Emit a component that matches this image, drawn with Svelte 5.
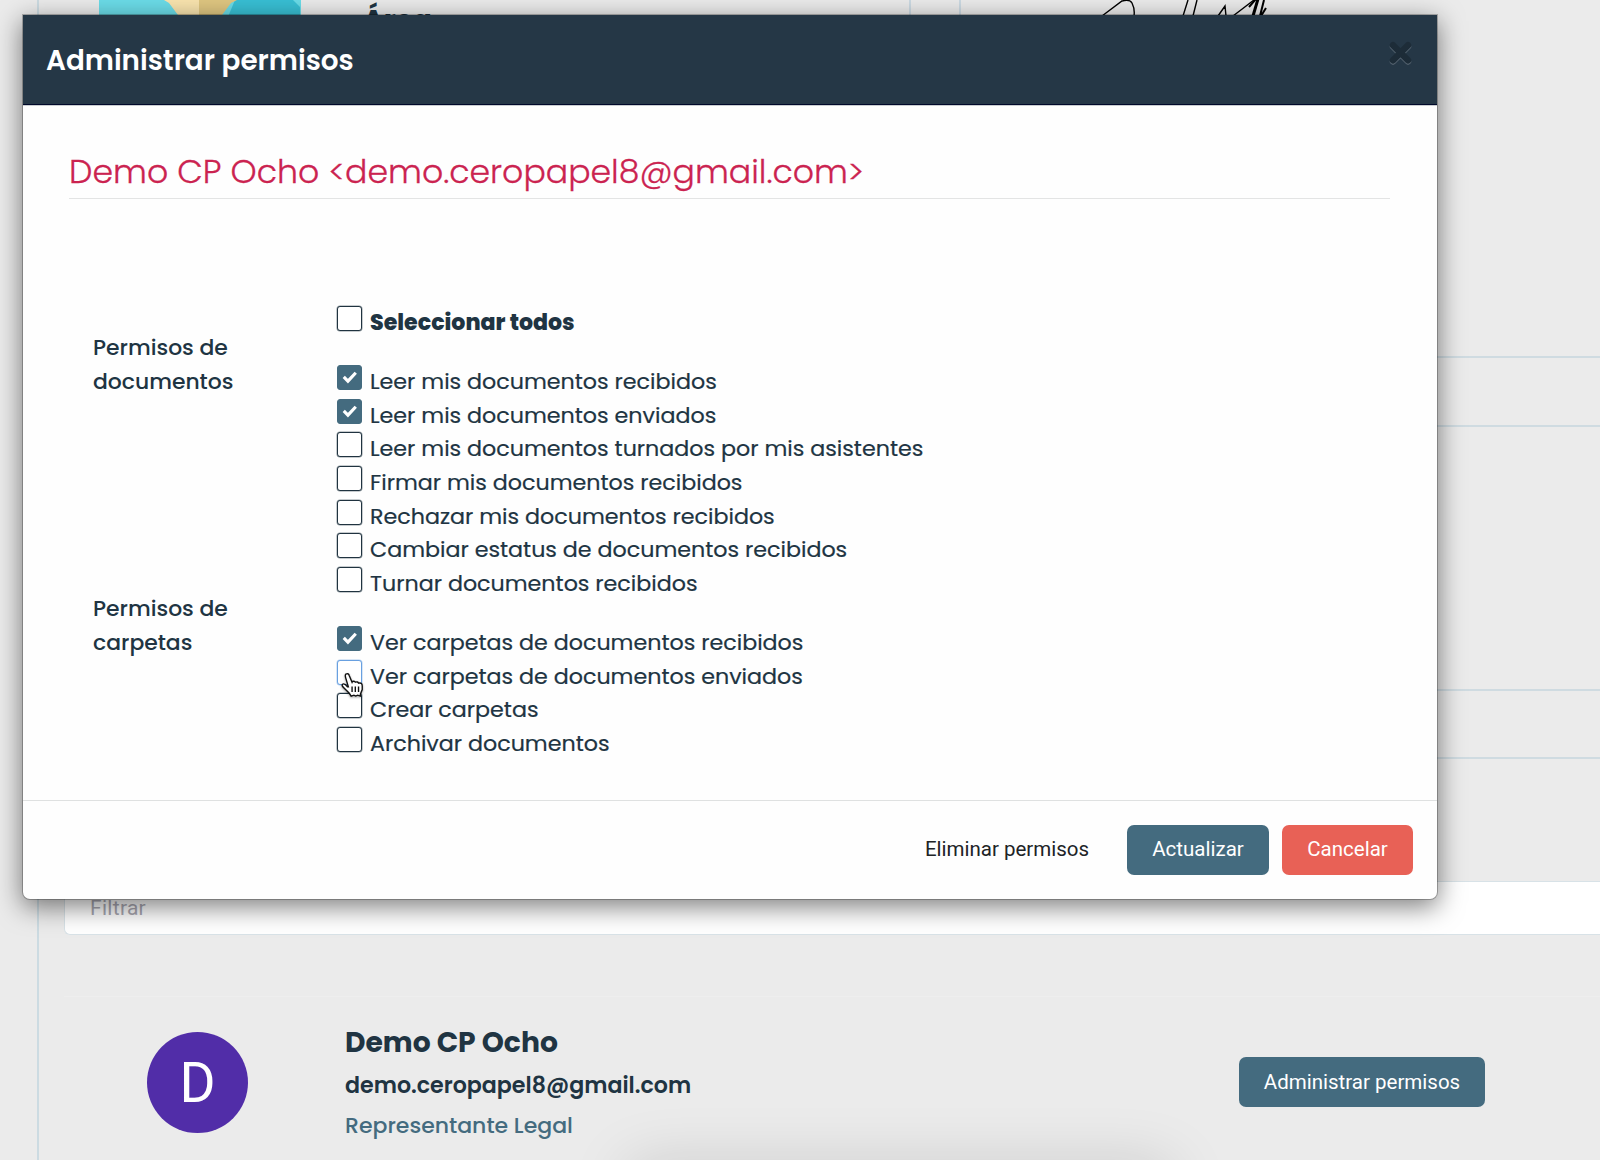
<script>
	let documentPermissions = [
		{ name: "Leer mis documentos recibidos", isChecked: true },
		{ name: "Leer mis documentos enviados", isChecked: true },
		{ name: "Leer mis documentos turnados por mis asistentes", isChecked: false },
		{ name: "Firmar mis documentos recibidos", isChecked: false },
		{ name: "Rechazar mis documentos recibidos", isChecked: false },
		{ name: "Cambiar estatus de documentos recibidos", isChecked: false },
		{ name: "Turnar documentos recibidos", isChecked: false },
	];

	let folderPermissions = [
		{ name: "Ver carpetas de documentos recibidos", isChecked: true },
		{ name: "Ver carpetas de documentos enviados", isChecked: false, isFocused: true },
		{ name: "Crear carpetas", isChecked: false },
		{ name: "Archivar documentos", isChecked: false },
	];

	const groups = [
		{ title: "Permisos de documentos", items: documentPermissions },
		{ title: "Permisos de carpetas", items: folderPermissions },
	];
</script>

<style>
	:global(body) {
		background: #ebebeb;
	}

	.page {
		position: relative;
		display: flex;
		flex-direction: column;
		box-sizing: border-box;
		width: 1600px;
		height: 1160px;
		padding-left: 37px;
		overflow: hidden;
		font-family: Poppins, Inter, "Open Sans", sans-serif;
		color: #203442;
	}

	.content {
		display: flex;
		flex-direction: column;
		height: 1160px;
		border-left: 2px solid #ccdbe2;
	}

	.profile {
		display: flex;
		height: 357px;
	}

	.photo {
		width: 202px;
		margin-left: 60px;
	}

	.area {
		width: 546px;
		margin-left: 62px;
		padding-top: 3px;
		border-right: 2px solid #cbd9e2;
		font-size: 28px;
		line-height: 36px;
		font-weight: 700;
	}

	.signature {
		flex: 1;
		margin-left: 48px;
		border-left: 2px solid #cbd9e2;
	}

	.signature svg {
		display: block;
		margin-left: 130px;
	}

	.row {
		box-sizing: border-box;
		border-top: 2px solid #cfdbe1;
	}

	.row-title {
		height: 69px;
	}

	.row-body {
		height: 264px;
	}

	.row-last {
		height: 124px;
	}

	.filter {
		box-sizing: border-box;
		height: 54px;
		margin-left: 25px;
		padding: 14px 25px;
		border: 1px solid #d8e2e7;
		border-right: 0;
		border-radius: 6px 0 0 6px;
		background: #ffffff;
		font-family: Roboto, sans-serif;
		font-size: 21px;
		line-height: 24px;
		letter-spacing: 0.3px;
		color: #a9a8b2;
	}

	.assistant {
		display: flex;
		box-sizing: border-box;
		height: 164px;
		margin: 61px 0 0 25px;
		padding: 35px 115px 0 83px;
		border-top: 1px solid #eeeeee;
	}

	.avatar {
		width: 101px;
		height: 101px;
		border-radius: 50%;
		background: #512da8;
		font-family: Roboto, sans-serif;
		font-size: 55px;
		line-height: 103px;
		text-align: center;
		color: #ffffff;
	}

	.assistant-data {
		flex: 1;
		margin-left: 97px;
		white-space: nowrap;
	}

	.assistant-name {
		margin-top: -9px;
		font-size: 28.2px;
		line-height: 38px;
		font-weight: 700;
	}

	.assistant-email {
		margin-top: 4px;
		font-size: 22.15px;
		line-height: 41px;
		font-weight: 600;
	}

	.assistant-role {
		font-size: 22px;
		line-height: 40px;
		font-weight: 500;
		color: #446b7f;
	}

	.button {
		height: 50px;
		padding: 0 0 2px;
		border: 0;
		border-radius: 7px;
		background: #446b7f;
		font-family: Roboto, sans-serif;
		font-size: 20.5px;
		color: #ffffff;
		cursor: pointer;
	}

	.button-manage {
		width: 246px;
		margin-top: 25px;
		padding-bottom: 0;
	}

	.button-link {
		width: 190px;
		background: transparent;
		color: #202326;
	}

	.button-update {
		width: 142px;
		margin-left: 25px;
	}

	.button-cancel {
		width: 131px;
		margin-left: 13px;
		background: #e86156;
	}

	.dock-shadow {
		position: absolute;
		left: 630px;
		bottom: -44px;
		width: 540px;
		height: 34px;
		border-radius: 17px;
		box-shadow: 0 0 60px 6px rgba(0, 0, 0, 0.15);
	}

	.modal {
		position: absolute;
		left: 23px;
		top: 15px;
		display: flex;
		flex-direction: column;
		width: 1414px;
		height: 884px;
		border-radius: 0 0 7px 7px;
		background: #fefefe;
		box-shadow: 0 0 0 1px rgba(0, 0, 0, 0.25), 0 7px 26px 1px rgba(0, 0, 0, 0.5);
	}

	.modal-header {
		display: flex;
		justify-content: space-between;
		box-sizing: border-box;
		height: 90px;
		padding: 25px 24px 0 23px;
		border-bottom: 1px solid #00082a;
		background: #253746;
		box-shadow: 0 1px 0 #c9cdd0;
		color: #ffffff;
	}

	.modal-title {
		margin: 0;
		font-size: 27.8px;
		line-height: 42px;
		font-weight: 600;
	}

	.close {
		width: 25px;
		height: 26px;
	}

	.modal-body {
		box-sizing: border-box;
		height: 695px;
		padding: 45px 47px 0 46px;
	}

	.user {
		height: 48px;
		margin: 0;
		border-bottom: 1px solid #e3e4e4;
		font-size: 33.15px;
		line-height: 43px;
		font-weight: 300;
		-webkit-text-stroke: 0.3px #cb2350;
		color: #cb2350;
		white-space: nowrap;
	}

	.select-all {
		margin: 107px 0 0 268px;
	}

	.group {
		display: flex;
		margin-top: 25.6px;
		padding-left: 24px;
	}

	.group-title {
		box-sizing: border-box;
		width: 244px;
		margin-top: -34px;
		padding-right: 90px;
		font-size: 21.9px;
		line-height: 33.6px;
		font-weight: 500;
	}

	.check {
		display: flex;
		height: 33.6px;
		font-size: 22.2px;
		line-height: 33px;
		font-weight: 400;
		-webkit-text-stroke: 0.2px #203442;
		white-space: nowrap;
	}

	.check-text {
		margin-left: 8px;
	}

	.check-all {
		font-size: 22.1px;
		font-weight: 800;
		-webkit-text-stroke: 0;
	}

	.box {
		position: relative;
		box-sizing: border-box;
		width: 25px;
		height: 25px;
		border: 1.5px solid #203340;
		border-radius: 3px;
		background: #ffffff;
		box-shadow: 0 0 0 0.5px rgba(32, 51, 64, 0.5);
	}

	.box.is-checked {
		border-color: #446b7f;
		background: #446b7f;
		box-shadow: none;
	}

	.box.is-focused {
		border-color: #68a0e0;
		box-shadow: 0 0 0 0.5px rgba(104, 160, 224, 0.5);
	}

	.box svg {
		display: block;
		width: 100%;
		height: 100%;
	}

	.box .pointer {
		position: absolute;
		left: 3px;
		top: 11px;
		z-index: 1;
		width: 24px;
		height: 26px;
		overflow: visible;
		filter: drop-shadow(0 1px 1px rgba(0, 0, 0, 0.35));
	}

	.modal-footer {
		display: flex;
		justify-content: flex-end;
		padding: 24px 24px 0 0;
		border-top: 1px solid #dfe1e1;
	}
</style>

<div class="page">
	<div class="content">
		<div class="profile">
			<div class="photo">
				<svg width="202" height="60">
					<path fill="#6bdce8" d="M0 0h202v60H0z" />
					<path fill="#38bfd4" d="M136 0h58l7 7v53h-90z" />
					<path fill="#f9e4ae" d="M65 0l5 3 9 12 21 30V0z" />
					<path fill="#dfc681" d="M100 0h38l-6 3-9 12-23 30z" />
				</svg>
			</div>
			<div class="area">Área</div>
			<div class="signature">
				<svg width="200" height="30" fill="none" stroke="#000" stroke-width="1.4">
					<path d="M11 16L31 1q8-2 10 2 3 6 2 13M92 16L97 0M102 16l4-16M127 16l7-10 1 10M142 16L163 0" />
					<path stroke-width="3" d="M162 16l5-17" />
					<path stroke-width="2" d="M158 7l7-8M169 16l4-16M170 16l5-8" />
				</svg>
			</div>
		</div>
		<div class="row row-title"></div>
		<div class="row row-body"></div>
		<div class="row row-title"></div>
		<div class="row row-last"></div>
		<div class="filter">Filtrar</div>
		<div class="assistant">
			<div class="avatar">D</div>
			<div class="assistant-data">
				<div class="assistant-name">Demo CP Ocho</div>
				<div class="assistant-email">demo.ceropapel8@gmail.com</div>
				<div class="assistant-role">Representante Legal</div>
			</div>
			<button class="button button-manage">Administrar permisos</button>
		</div>
	</div>

	<div class="dock-shadow"></div>

	<div class="modal">
		<div class="modal-header">
			<h4 class="modal-title">Administrar permisos</h4>
			<svg class="close" viewBox="0 0 25 26" fill="none" stroke-width="6.500" stroke-linecap="round">
				<path stroke="#53616e" d="M5 6.500l15 15M20 6.500l-15 15" />
				<path stroke="#1d2c38" d="M5 5.300l15 15M20 5.300l-15 15" />
			</svg>
		</div>

		<div class="modal-body">
			<h3 class="user">Demo CP Ocho &lt;demo.ceropapel8@gmail.com&gt;</h3>

			<div class="check check-all select-all">
				<div class="box"></div>
				<div class="check-text">Seleccionar todos</div>
			</div>

			{#each groups as group}
				<div class="group">
					<div class="group-title">{group.title}</div>
					<div>
						{#each group.items as item}
							<div class="check">
								<div class="box" class:is-checked={item.isChecked} class:is-focused={item.isFocused}>
									{#if item.isChecked}
										<svg viewBox="0 0 22 22" fill="none" stroke="#fff" stroke-width="3">
											<path d="M5.500 10.500l4 4 7.500-8" />
										</svg>
									{/if}
									{#if item.isFocused}
										<svg class="pointer" viewBox="0 0 26 28" fill="#fff" stroke="#111" stroke-width="1.500">
											<path d="M8 16L5 6q-1-4 1-4 2-1 3 2l3 7q1-2 4 0 2-1 3 1 4-1 4 3v4l-2 5v2l-3-1-2 1-2-1-3 1-2-3-6-6q-3-3-1-4t5 3z" />
											<path d="M12 15.500v6M15.500 15.500v6M19 15.500v6" />
										</svg>
									{/if}
								</div>
								<div class="check-text">{item.name}</div>
							</div>
						{/each}
					</div>
				</div>
			{/each}
		</div>

		<div class="modal-footer">
			<button class="button button-link">Eliminar permisos</button>
			<button class="button button-update">Actualizar</button>
			<button class="button button-cancel">Cancelar</button>
		</div>
	</div>
</div>
